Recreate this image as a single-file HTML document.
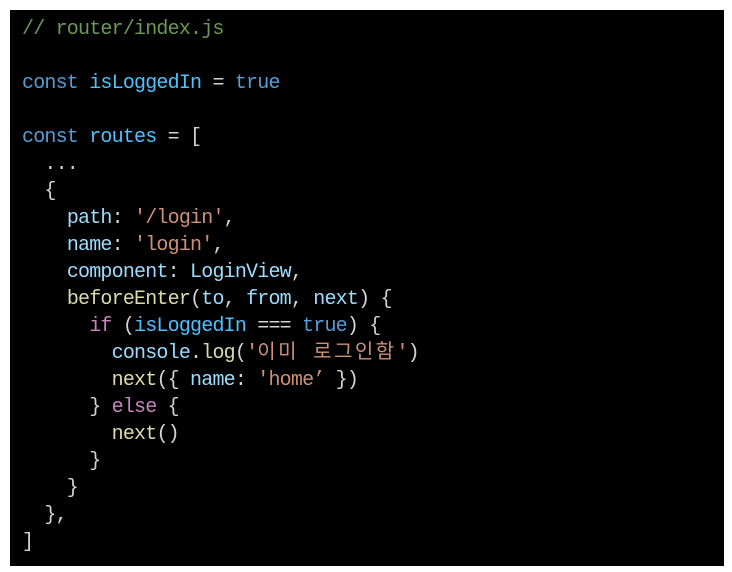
<!DOCTYPE html>
<html><head><meta charset="utf-8"><style>
html,body{margin:0;padding:0;background:#fff;width:732px;height:572px;overflow:hidden}
.box{position:absolute;left:10px;top:10px;width:714px;height:556px;background:#000}
pre{margin:0;padding:6px 0 0 12px;font-family:"Liberation Mono","Noto Sans CJK KR",monospace;font-size:20px;letter-spacing:-0.8px;line-height:27px;color:#d4d4d4}
.c{color:#6a9955}.k{color:#569cd6}.v{color:#4fc1ff}.p{color:#9cdcfe}.s{color:#ce9178}.f{color:#dcdcaa}.m{color:#c586c0}
.ko{font-size:20px;letter-spacing:2.4px}
</style></head><body><div class="box"><pre><span class="c">// router/index.js</span>

<span class="k">const</span> <span class="v">isLoggedIn</span> = <span class="k">true</span>

<span class="k">const</span> <span class="v">routes</span> = [
  ...
  {
    <span class="p">path</span>: <span class="s">'/login'</span>,
    <span class="p">name</span>: <span class="s">'login'</span>,
    <span class="p">component</span>: <span class="p">LoginView</span>,
    <span class="f">beforeEnter</span>(<span class="p">to</span>, <span class="p">from</span>, <span class="p">next</span>) {
      <span class="m">if</span> (<span class="v">isLoggedIn</span> === <span class="k">true</span>) {
        <span class="p">console</span>.<span class="f">log</span>(<span class="s">'<span class="ko">이미 로그인함</span>'</span>)
        <span class="f">next</span>({ <span class="p">name</span>: <span class="s">'home’</span> })
      } <span class="m">else</span> {
        <span class="f">next</span>()
      }
    }
  },
]</pre></div></body></html>
